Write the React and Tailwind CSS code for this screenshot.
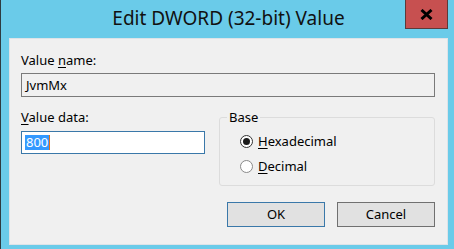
export default function App() {
  const ui = { fontFamily: '"Noto Sans", "Open Sans", sans-serif' };
  return (
    <div
      className="w-[454px] h-[249px] bg-[#6acbe9] border-l border-[#2e3b40] overflow-hidden text-black"
      style={ui}
    >
      {/* title bar */}
      <div className="relative h-[38px] flex items-center justify-center">
        <span className="text-[19px] leading-none text-[#111] pl-[2px] pb-[1px]">
          Edit DWORD (32-bit) Value
        </span>
        <button className="absolute top-0 right-[6px] w-[43px] h-[29px] bg-[#c75050] border border-t-0 border-[#5d3a3a] flex items-center justify-center">
          <svg width="13" height="11" viewBox="0 0 13 11">
            <path d="M1.5 1 L11.5 10 M11.5 1 L1.5 10" stroke="#000" strokeWidth="3" />
          </svg>
        </button>
      </div>

      {/* client area */}
      <div className="ml-[8px] w-[439px] h-[207px] bg-[#f0f0f0] border border-[#dde3e8] pl-[11px] pr-[12px] pt-[13px] text-[13px]">
        <div className="leading-[16px]">
          Value <u className="underline-offset-2">n</u>ame:
        </div>
        <div className="mt-[5px] h-[24px] border border-[#7a7a7a] bg-[#f0f0f0] flex items-center pl-[4px] leading-none">
          JvmMx
        </div>

        <div className="flex gap-[14px] mt-[12px]">
          <div className="w-[184px]">
            <div className="leading-[16px]">
              <u className="underline-offset-2">V</u>alue data:
            </div>
            <div className="mt-[6px] h-[23px] border border-[#3a78a9] bg-white flex items-center pl-[3px]">
              <span className="bg-[#3399ff] text-white leading-[15px] px-[1px]">800</span>
              <span className="w-[1px] h-[15px] bg-[#e0701a]" />
            </div>
          </div>

          <fieldset className="flex-1 h-[77px] border border-[#dcdcdc] rounded-[3px] px-[7px] pt-[4px]">
            <legend className="px-[2px] leading-[16px]">Base</legend>
            <label className="flex items-center h-[25px] pl-[13px]">
              <span className="w-[13px] h-[13px] rounded-full border border-[#333] bg-white flex items-center justify-center">
                <span className="w-[7px] h-[7px] rounded-full bg-[#1a1a1a]" />
              </span>
              <span className="ml-[5px]">
                <u className="underline-offset-2">H</u>exadecimal
              </span>
            </label>
            <label className="flex items-center h-[25px] pl-[13px]">
              <span className="w-[13px] h-[13px] rounded-full border border-[#8a8a8a] bg-white" />
              <span className="ml-[5px]">
                <u className="underline-offset-2">D</u>ecimal
              </span>
            </label>
          </fieldset>
        </div>

        <div className="flex justify-end gap-[12px] mt-[16px]">
          <button className="w-[98px] h-[25px] bg-[#e1e1e1] border border-[#3a78a9]">OK</button>
          <button className="w-[98px] h-[25px] bg-[#e1e1e1] border border-[#707070]">Cancel</button>
        </div>
      </div>
    </div>
  );
}
